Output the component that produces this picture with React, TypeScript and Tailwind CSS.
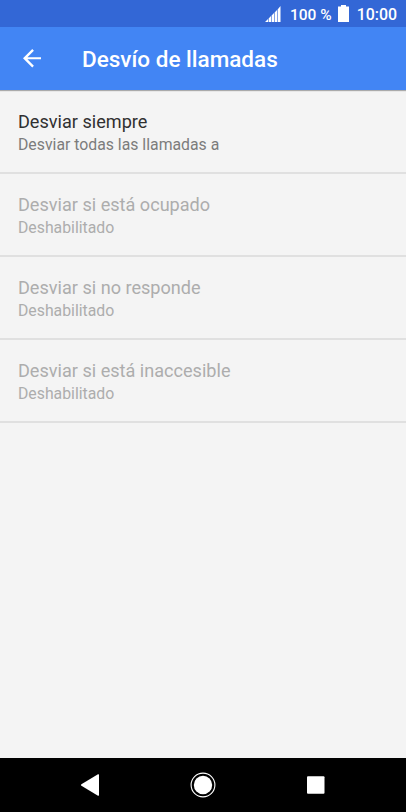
import React from 'react';

interface ForwardingOption {
  id: string;
  title: string;
  summary: string;
  enabled: boolean;
}

const options: ForwardingOption[] = [
  { id: 'always', title: 'Desviar siempre', summary: 'Desviar todas las llamadas a', enabled: true },
  { id: 'busy', title: 'Desviar si está ocupado', summary: 'Deshabilitado', enabled: false },
  { id: 'unanswered', title: 'Desviar si no responde', summary: 'Deshabilitado', enabled: false },
  { id: 'unreachable', title: 'Desviar si está inaccesible', summary: 'Deshabilitado', enabled: false }
];

const StatusBar: React.FC = () => (
  <div className="flex h-[27px] shrink-0 items-center justify-end bg-[#3367d6] pr-[9px] font-medium text-white">
    <svg className="mr-[9px] h-4 w-4" viewBox="0 0 16 16" fill="currentColor">
      <path d="M0 16l3-3v3zM3.600 12.400l2.400-2.400v6H3.600zM6.600 9.400L9 7v9H6.600zM9.600 6.400L12 4v12H9.600zM12.600 3.400L15.500 0v16h-2.900z" />
    </svg>
    <span className="pt-[2px] text-[15.500px] leading-5">100 %</span>
    <svg className="ml-[6px] mr-[8px] h-[17px] w-[11px]" viewBox="0 0 11 17" fill="currentColor">
      <path d="M3 0h5v1.500h3V17H0V1.500h3z" />
    </svg>
    <span className="pt-[2px] text-[15.900px] leading-5">10:00</span>
  </div>
);

const NavigationBar: React.FC = () => (
  <nav className="flex h-[54px] shrink-0 items-center justify-between bg-black px-[77px] text-white">
    <button aria-label="Atrás">
      <svg className="h-[26px] w-[26px]" viewBox="0 0 26 26" fill="currentColor">
        <path d="M4.400 12.300L21 2.300q1-.5 1 .6v20.200q0 1.100-1 .6L4.400 13.700q-1-.7 0-1.400z" />
      </svg>
    </button>
    <button aria-label="Inicio">
      <svg className="h-[26px] w-[26px]" viewBox="0 0 26 26">
        <circle cx="13" cy="13" r="11.900" fill="none" stroke="currentColor" strokeWidth="1.100" />
        <circle cx="13" cy="13" r="9.200" fill="currentColor" />
      </svg>
    </button>
    <button aria-label="Recientes">
      <svg className="h-[26px] w-[26px]" viewBox="0 0 26 26" fill="currentColor">
        <rect x="4" y="4.200" width="17.500" height="17.500" rx="1" />
      </svg>
    </button>
  </nav>
);

const App: React.FC = () => {
  return (
    <div className="flex h-screen flex-col bg-[#f4f4f4] font-['Roboto',sans-serif]">
      <StatusBar />

      {/* Toolbar */}
      <header className="flex h-[63px] shrink-0 items-center bg-[#4285f4] pl-[22.500px] text-white shadow-[0_1px_1px_rgba(0,0,0,0.3)]">
        <button aria-label="Volver" className="mr-[41px]">
          <svg className="h-[18.500px] w-[18.500px]" viewBox="4 4 16 16" fill="currentColor">
            <path d="M20 11.100H7.830l5.590-5.690L12 4l-8 8 8 8 1.410-1.410L7.830 12.900H20z" />
          </svg>
        </button>
        <h1 className="pt-[2px] text-[22.500px] font-medium">Desvío de llamadas</h1>
      </header>

      <main className="flex-1 pt-px">
        {options.map(option => (
          <div
            key={option.id}
            className={`h-[83px] border-b-2 border-[#e0e0e0] px-[18px] pt-[19px] ${
              option.enabled ? 'text-[#303030]' : 'text-[#adadad]'
            }`}
          >
            <div className="text-[18.100px] leading-[23px]">{option.title}</div>
            <div className={`text-[15.800px] leading-[23px] ${option.enabled ? 'text-[#7c7c7c]' : ''}`}>
              {option.summary}
            </div>
          </div>
        ))}
      </main>

      <NavigationBar />
    </div>
  );
};

export default App;
